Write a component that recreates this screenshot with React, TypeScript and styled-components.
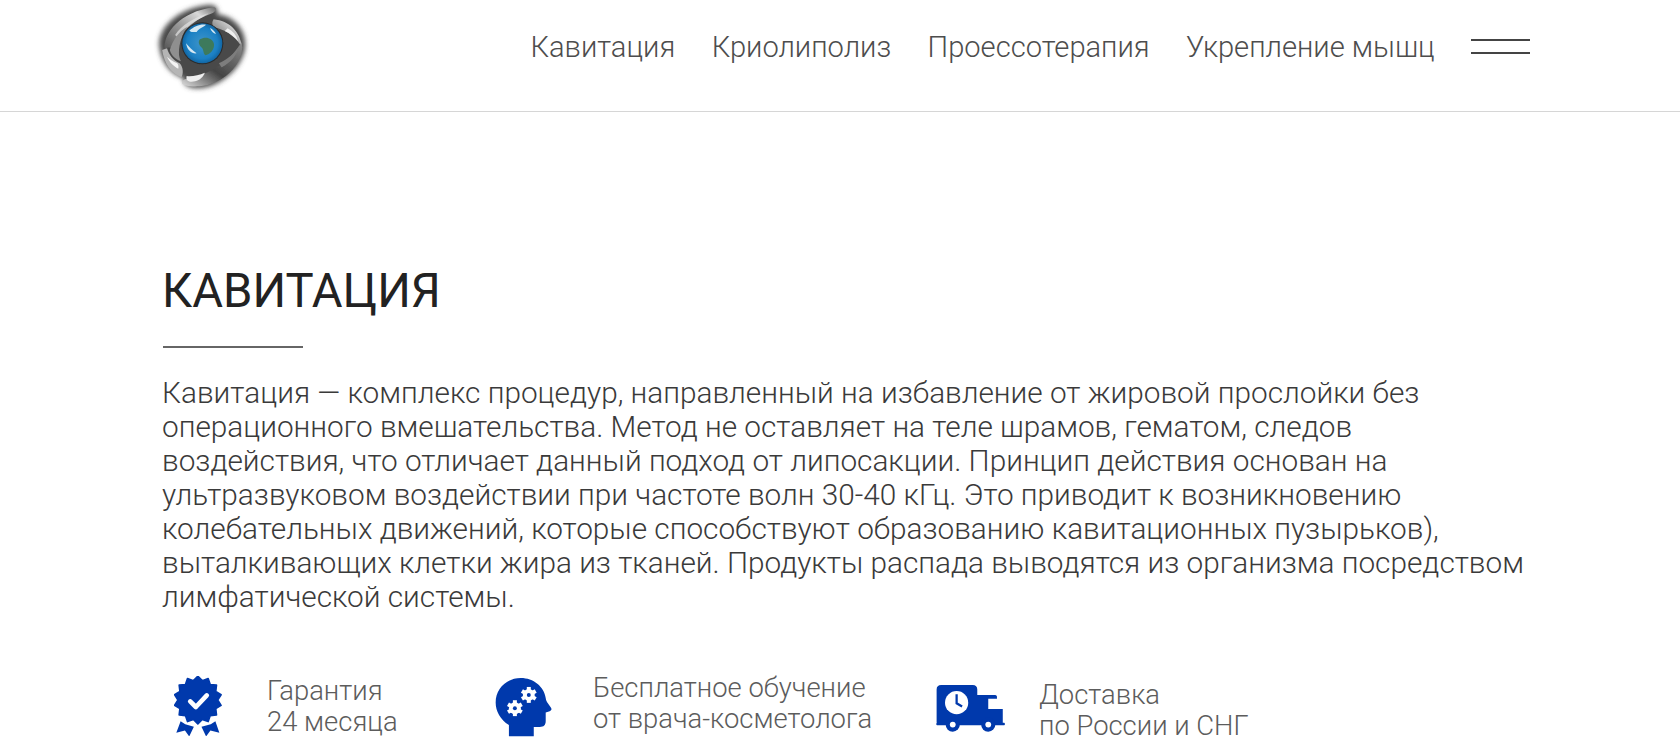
import styled, { createGlobalStyle } from "styled-components"

const GlobalStyle = createGlobalStyle`
  html, body {
    margin: 0;
    padding: 0;
    height: 743px;
    overflow: hidden;
    background: #fff;
  }
  body {
    font-family: Roboto, "Liberation Sans", sans-serif;
    font-weight: 300;
    color: #222;
  }
`

const Header = styled.header`
  height: 112px;
  box-sizing: border-box;
  border-bottom: 1px solid #d6d6d6;
  padding: 0 150px;
  display: flex;
  align-items: center;
  justify-content: space-between;
`

const Logo = styled.svg`
  width: 100px;
  height: 95px;
  margin-bottom: 16px;
  display: block;
`

const Nav = styled.nav`
  display: flex;
  align-items: center;
  margin-bottom: 18px;
`

const NavLink = styled.a`
  font-size: 29.1px;
  line-height: 34px;
  color: #4d4d4d;
  margin-right: 36.4px;
  white-space: nowrap;
`

const Burger = styled.button`
  width: 59px;
  height: 11px;
  margin-left: 0;
  padding: 0;
  background: none;
  border: 0;
  border-top: 2px solid #444;
  border-bottom: 2px solid #444;
  box-sizing: content-box;
`

const Main = styled.main`
  padding: 149px 0 0 162px;
  width: 1373px;
`

const Title = styled.h1`
  margin: 0;
  font-size: 47.2px;
  line-height: 60px;
  font-weight: 400;
  color: #222;
`

const TitleRule = styled.div`
  width: 140px;
  height: 2px;
  background: #666;
  margin: 25px 0 28px 1px;
`

const Text = styled.p`
  margin: 0;
  font-size: 29.75px;
  line-height: 34px;
  color: #3a3a3a;
`

const Benefits = styled.ul`
  list-style: none;
  margin: 0;
  padding: 0;
  display: flex;
  margin-top: 62px;
`

const Benefit = styled.li<{ $width: number; $iconWidth: number; $indent: number }>`
  width: ${props => props.$width}px;
  padding-left: ${props => props.$indent}px;
  box-sizing: border-box;
  display: grid;
  grid-template-columns: ${props => props.$iconWidth}px 1fr;
  align-items: start;
`

const BenefitLabel = styled.div<{ $shift: number }>`
  font-size: 27.4px;
  line-height: 31px;
  color: #5c5c5c;
  white-space: nowrap;
  margin-top: ${props => props.$shift}px;
`

const BadgeIcon = styled.svg`
  display: block;
  width: 48px;
  height: 60px;
  fill: #0039ac;
`

const HeadIcon = styled.svg`
  display: block;
  width: 57px;
  height: 59px;
  margin-top: 2px;
  fill: #0039ac;
`

const TruckIcon = styled.svg`
  display: block;
  width: 71px;
  height: 49px;
  margin-top: 7px;
  fill: #0039ac;
`

const Badge = () => {
  const points: string[] = []
  for (let i = 0; i < 28; i++) {
    const r = i % 2 === 0 ? 72 : 60
    const a = (i * Math.PI) / 14
    points.push(`${(97 + r * Math.sin(a)).toFixed(1)},${(88 - r * Math.cos(a)).toFixed(1)}`)
  }
  return (
    <BadgeIcon viewBox="25 16 145 180">
      <polygon points={points.join(" ")} stroke="#0039ac" strokeWidth="5" strokeLinejoin="round" />
      <path d="M74 92l17 17 33-35" fill="none" stroke="#fff" strokeWidth="14" strokeLinecap="round" strokeLinejoin="round" />
      <path d="M45 152l14 9 26 8-14 29-13-18-26 7z" />
      <path d="M150 152l-14 9-28 8 14 29 13-18 27 7z" />
    </BadgeIcon>
  )
}

const Gear = ({ x, y }: { x: number; y: number }) => (
  <g transform={`translate(${x} ${y})`}>
    {[0, 60, 120].map(a => (
      <rect key={a} x={-6} y={-24} width={12} height={48} fill="#fff" transform={`rotate(${a})`} />
    ))}
    <circle r={18} fill="#fff" />
    <circle r={6} fill="#0039ac" />
  </g>
)

const Head = () => (
  <HeadIcon viewBox="28 24 172 178">
    <path d="M70 200V166C44 150 30 124 30 98 30 56 64 24 106 24c38 0 70 26 75 60 1 8 3 11 7 17l9 13c3 5 1 8-4 10l-12 4v26c0 12-6 18-18 18h-18v28z" />
    <Gear x={130} y={75} />
    <Gear x={88} y={115} />
  </HeadIcon>
)

const Truck = () => (
  <TruckIcon viewBox="25 30 220 150">
    <path d="M44 35h98c9 0 14 5 14 14v17h55c5 0 6 3 6 7v5h-27v32h45v42h3c5 0 5 8 0 8H33c-5 0-6-8 0-8h-3V49c0-9 5-14 14-14z" />
    <circle cx="80" cy="158" r="22" />
    <circle cx="80" cy="158" r="9" fill="#fff" />
    <circle cx="190" cy="158" r="22" />
    <circle cx="190" cy="158" r="9" fill="#fff" />
    <circle cx="92" cy="90" r="36" fill="#fff" />
    <path d="M92 64v28l17 10" fill="none" stroke="#0039ac" strokeWidth="7" />
  </TruckIcon>
)

const EarthLogo = () => (
  <Logo viewBox="0 0 300 285">
    <defs>
      <radialGradient id="globe" cx="50%" cy="50%" r="55%">
        <stop offset="0%" stopColor="#3f95c9" />
        <stop offset="70%" stopColor="#1b80c4" />
        <stop offset="100%" stopColor="#0e5a94" />
      </radialGradient>
      <linearGradient id="metal" x1="0" y1="1" x2="1" y2="0">
        <stop offset="0%" stopColor="#555" />
        <stop offset="45%" stopColor="#9b9b9b" />
        <stop offset="75%" stopColor="#d8d8d8" />
        <stop offset="100%" stopColor="#6b6b6b" />
      </linearGradient>
      <linearGradient id="steel" x1="0" y1="1" x2="1" y2="0">
        <stop offset="0%" stopColor="#ddd" />
        <stop offset="45%" stopColor="#444" />
        <stop offset="100%" stopColor="#8a8a8a" />
      </linearGradient>
      <filter id="haze" x="-20%" y="-20%" width="140%" height="140%">
        <feGaussianBlur stdDeviation="8" />
      </filter>
      <filter id="soft">
        <feGaussianBlur stdDeviation="1.500" />
      </filter>
    </defs>
    <g transform="translate(-14 0) scale(1.05 1)">
      <path d="M40 140C35 85 90 25 180 15c25-3 30 15 25 28 50 5 85 50 80 100-8 60-70 120-135 122-30 0-45-15-40-30-40-15-65-50-70-95z" fill="#4a4a4a" filter="url(#haze)" />
      <g filter="url(#soft)">
        <path d="M55 150C50 100 100 35 195 22c10 0 8 12-4 18-50 20-90 45-112 105-8-3-17-4-24 5z" fill="url(#metal)" />
        <path d="M85 105c20-30 50-50 95-65-30 20-65 40-85 75z" fill="#e4e4e4" opacity="0.7" />
        <path d="M195 58c45 5 75 35 82 85-15-25-35-50-82-62-5-8-5-15 0-23z" fill="url(#metal)" />
        <path d="M235 85c15 8 25 20 30 38-12-12-22-22-38-30z" fill="#f0f0f0" />
        <path d="M48 150c6 40 25 70 55 82 6-10 6-30-5-42-20-10-30-25-36-45z" fill="#b5b5b5" />
        <path d="M62 170c8 18 18 28 32 36 2-6 0-12-3-16-12-5-20-12-29-20z" fill="#f4f4f4" />
        <path d="M105 245c5-12 25-8 50-18 50-18 90-50 120-100 12 60-50 125-120 132-25 2-55-2-50-14z" fill="url(#steel)" />
        <path d="M118 228c15 2 35-2 52-10-4 12-14 22-28 26-12 3-28 2-24-16z" fill="#efefef" />
        <path d="M70 150c8-30 25-55 50-70-14 22-24 50-24 78 0 10 2 18 6 26-16-6-28-18-32-34z" fill="#8f8f8f" />
        <path d="M210 190c25-12 45-30 58-52-6 28-24 50-50 64z" fill="#7d7d7d" />
      </g>
    </g>
    <circle cx="157" cy="130" r="63" fill="#2a2a2a" filter="url(#soft)" />
    <circle cx="157" cy="130" r="60" fill="url(#globe)" />
    <path d="M150 118c15-10 38-5 42 14 2 16-12 32-26 34-8-8-4-18-12-24-8-8-10-18-4-24z" fill="#3d7a5c" />
    <path d="M118 92c14-12 30-20 50-18-8 8-22 10-28 22-8 0-14 2-22-4zM108 130c8 10 20 22 32 30-14 2-28-8-32-30zM180 84c8 4 14 10 18 18-8-2-14-8-18-18z" fill="#d5e8f3" />
  </Logo>
)

export default function App() {
  return (
    <>
      <GlobalStyle />
      <Header>
        <EarthLogo />
        <Nav>
          <NavLink>Кавитация</NavLink>
          <NavLink>Криолиполиз</NavLink>
          <NavLink>Проессотерапия</NavLink>
          <NavLink>Укрепление мышц</NavLink>
          <Burger aria-label="Меню" />
        </Nav>
      </Header>
      <Main>
        <Title>КАВИТАЦИЯ</Title>
        <TitleRule />
        <Text>
          Кавитация — комплекс процедур, направленный на избавление от жировой прослойки без
          операционного вмешательства. Метод не оставляет на теле шрамов, гематом, следов
          воздействия, что отличает данный подход от липосакции. Принцип действия основан на
          ультразвуковом воздействии при частоте волн 30-40 кГц. Это приводит к возникновению
          колебательных движений, которые способствуют образованию кавитационных пузырьков),
          выталкивающих клетки жира из тканей. Продукты распада выводятся из организма посредством
          лимфатической системы.
        </Text>
        <Benefits>
          <Benefit $width={333} $iconWidth={93} $indent={12}>
            <Badge />
            <BenefitLabel $shift={0}>Гарантия<br />24 месяца</BenefitLabel>
          </Benefit>
          <Benefit $width={440} $iconWidth={98} $indent={0}>
            <Head />
            <BenefitLabel $shift={-3}>Бесплатное обучение<br />от врача-косметолога</BenefitLabel>
          </Benefit>
          <Benefit $width={400} $iconWidth={104} $indent={0}>
            <Truck />
            <BenefitLabel $shift={4}>Доставка<br />по России и СНГ</BenefitLabel>
          </Benefit>
        </Benefits>
      </Main>
    </>
  )
}
